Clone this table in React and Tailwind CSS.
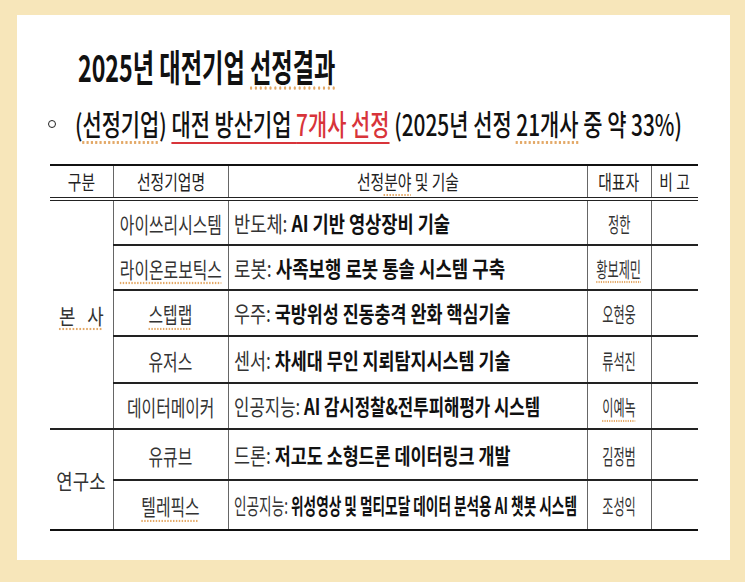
import React from "react";

const font = { fontFamily: '"Noto Sans CJK KR", "Noto Sans", sans-serif' };

const rows = [
  { name: "아이쓰리시스템", field: "반도체:", tech: "AI 기반 영상장비 기술", ceo: "정한", h: "h-[46px]", sc: "scale-x-[0.8]" },
  { name: "라이온로보틱스", nameMark: true, field: "로봇:", tech: "사족보행 로봇 통솔 시스템 구축", ceo: "황보제민", ceoMark: true, h: "h-[45px]", sc: "scale-x-[0.81]" },
  { name: "스텝랩", nameMark: true, field: "우주:", tech: "국방위성 진동충격 완화 핵심기술", ceo: "오현웅", h: "h-[46px]", sc: "scale-x-[0.79]" },
  { name: "유저스", field: "센서:", tech: "차세대 무인 지뢰탐지시스템 기술", ceo: "류석진", h: "h-[47px]", sc: "scale-x-[0.79]" },
  { name: "데이터메이커", field: "인공지능:", tech: "AI 감시정찰&전투피해평가 시스템", ceo: "이예녹", ceoMark: true, h: "h-[46px]", sc: "scale-x-[0.76]" },
  { name: "유큐브", field: "드론:", tech: "저고도 소형드론 데이터링크 개발", ceo: "김정범", h: "h-[51px]", sc: "scale-x-[0.79]" },
  { name: "텔레픽스", nameMark: true, field: "인공지능:", tech: "위성영상 및 멀티모달 데이터 분석용 AI 챗봇 시스템", ceo: "조성익", h: "h-[50px]", sc: "scale-x-[0.62]" },
];

const mark = "underline decoration-dotted decoration-[#e3a866] underline-offset-[5px]";

function Squeeze({ children, className = "" }) {
  return <span className={`inline-block shrink-0 whitespace-nowrap ${className}`}>{children}</span>;
}

// centres a squeezed label even when its unscaled box is wider than the cell
function Center({ children }) {
  return <div className="flex justify-center">{children}</div>;
}

export default function App() {
  const line = (i) => `border-b-2 ${i === 6 ? "border-b-[#111]" : "border-b-[#222]"}`;

  return (
    <div className="w-[745px] h-[582px] overflow-hidden bg-[#f7e6ba] pt-[15px] pl-[17px]" style={font}>
      <div className="w-[713px] h-[545px] overflow-hidden bg-white">
        <div className="ml-[61px] pt-[31px] h-[85px]">
          <Squeeze className="origin-left scale-x-[0.627] text-[37px] leading-[40px] font-bold text-[#111]">
            2025년 대전기업 <span className={mark}>선정결과</span>
          </Squeeze>
        </div>

        <div className="ml-[31px] mt-[6px] h-[34px] flex items-center">
          <span className="shrink-0 w-[8px] h-[8px] rounded-full border border-[#222] mr-[19px] mt-[2px]" />
          <Squeeze className="origin-left scale-x-[0.72] text-[29px] leading-[34px] font-medium text-[#111]">
            (<span className={mark}>선정기업</span>){" "}
            <span className="underline decoration-[#d8343a] decoration-[1.5px] underline-offset-[6px]">
              대전 방산기업 <span className="text-[#d8343a]">7개사 선정</span>
            </span>{" "}
            (2025년 선정 <span className={mark}>21개사</span> 중 약 33%)
          </Squeeze>
        </div>

        <table className="ml-[33px] mt-[24px] w-[648px] table-fixed border-collapse text-[#222]">
          <colgroup>
            <col className="w-[63px]" />
            <col className="w-[115px]" />
            <col className="w-[359px]" />
            <col className="w-[64px]" />
            <col className="w-[47px]" />
          </colgroup>
          <thead>
            <tr className="h-[34px]">
              {["구분", "선정기업명", "선정분야 및 기술", "대표자", "비 고"].map((t, i) => (
                <th
                  key={t}
                  className={`p-0 font-normal border-t-2 border-t-[#111] border-b-4 border-b-[#222] [border-bottom-style:double] ${i < 4 ? "border-r border-r-[#666]" : ""}`}
                >
                  <Center>
                    <Squeeze className="scale-x-[0.74] text-[20px] leading-[26px]">
                      {t === "선정분야 및 기술" ? (
                        <>
                          선정<span className={mark}>분야</span> 및 기술
                        </>
                      ) : (
                        t
                      )}
                    </Squeeze>
                  </Center>
                </th>
              ))}
            </tr>
          </thead>
          <tbody>
            {rows.map((r, i) => (
              <tr key={r.name} className={r.h}>
                {i === 0 && (
                  <td rowSpan={5} className="p-0 border-r border-r-[#666] border-b-2 border-b-[#222]">
                    <Center>
                      <Squeeze className="scale-x-[0.85] text-[21px] leading-[26px] text-[#333]">
                        <span className={mark}>본&nbsp;&nbsp;&nbsp;사</span>
                      </Squeeze>
                    </Center>
                  </td>
                )}
                {i === 5 && (
                  <td rowSpan={2} className="p-0 border-r border-r-[#666] border-b-2 border-b-[#111]">
                    <Center>
                      <Squeeze className="scale-x-[0.85] text-[21px] leading-[26px] text-[#333]">연구소</Squeeze>
                    </Center>
                  </td>
                )}
                <td className={`p-0 border-r border-r-[#666] ${line(i)}`}>
                  <Center>
                    <Squeeze className="scale-x-[0.72] text-[22px] leading-[26px] text-[#333]">
                      <span className={r.nameMark ? mark : ""}>{r.name}</span>
                    </Squeeze>
                  </Center>
                </td>
                <td className={`p-0 pl-[5px] text-left border-r border-r-[#666] ${line(i)}`}>
                  <Squeeze className={`origin-left text-[22px] leading-[26px] ${r.sc}`}>
                    <span className="text-[#333]">{r.field}</span>{" "}
                    <span className="font-bold text-[#111]">{r.tech}</span>
                  </Squeeze>
                </td>
                <td className={`p-0 border-r border-r-[#666] ${line(i)}`}>
                  <Center>
                    <Squeeze className="scale-x-[0.58] text-[21px] leading-[26px] text-[#333]">
                      <span className={r.ceoMark ? mark : ""}>{r.ceo}</span>
                    </Squeeze>
                  </Center>
                </td>
                <td className={`p-0 ${line(i)}`} />
              </tr>
            ))}
          </tbody>
        </table>
      </div>
    </div>
  );
}
